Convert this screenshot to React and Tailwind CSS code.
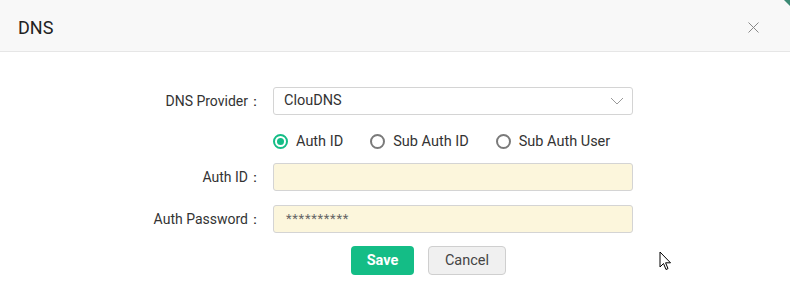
import React from 'react';

// DNS settings dialog
function Radio({ checked, label }) {
  return (
    <label className="flex items-center gap-[8px] cursor-pointer">
      <span
        className={
          checked
            ? 'flex h-[15px] w-[15px] items-center justify-center rounded-full border-2 border-[#14bd86]'
            : 'flex h-[15px] w-[15px] items-center justify-center rounded-full border-2 border-[#7a7a7a]'
        }
      >
        {checked && <span className="h-[7px] w-[7px] rounded-full bg-[#14bd86]" />}
      </span>
      <span className="text-[14.5px] text-[#333]">{label}</span>
    </label>
  );
}

function Row({ label, children, className = '' }) {
  return (
    <div className={`flex items-center ${className}`}>
      <div className="w-[273px] pr-[11px] text-right text-[14px] text-[#333]">
        {label}
      </div>
      <div className="w-[360px]">{children}</div>
    </div>
  );
}

export default function App() {
  return (
    <div
      className="relative h-[304px] w-[790px] overflow-hidden bg-white"
      style={{ fontFamily: 'Roboto, "Liberation Sans", sans-serif' }}
    >
      {/* Header */}
      <div className="flex h-[52px] items-center justify-between border-b border-[#e6e6e6] bg-[#f8f8f8] pl-[18px] pr-[31px] pt-[4px]">
        <h1 className="text-[18px] text-[#222]">DNS</h1>
        <svg width="11" height="11" viewBox="0 0 11 11" className="text-[#888]">
          <path d="M0.5 0.5L10.5 10.5M10.5 0.5L0.5 10.5" stroke="currentColor" strokeWidth="1" />
        </svg>
      </div>
      <div className="absolute right-0 top-0 h-[6px] w-[6px] bg-[#3c8a74] [clip-path:polygon(0_0,100%_0,100%_100%)]" />

      {/* Form */}
      <div className="flex flex-col pt-[35px]">
        <Row label="DNS Provider：">
          <div className="flex h-[28px] items-center justify-between rounded-[3px] border border-[#d4d4d4] bg-white pl-[10px] pr-[8px]">
            <span className="text-[14.5px] text-[#333]">ClouDNS</span>
            <svg width="14" height="8" viewBox="0 0 14 8" className="text-[#999]">
              <path d="M1 1L7 7L13 1" fill="none" stroke="currentColor" strokeWidth="1" />
            </svg>
          </div>
        </Row>

        <Row label="" className="mt-[13px]">
          <div className="flex h-[27px] items-center gap-[27px]">
            <Radio checked label="Auth ID" />
            <Radio label="Sub Auth ID" />
            <Radio label="Sub Auth User" />
          </div>
        </Row>

        <Row label="Auth ID：" className="mt-[8px]">
          <div className="h-[28px] rounded-[3px] border border-[#d4d4d4] bg-[#fcf6dc]" />
        </Row>

        <Row label="Auth Password：" className="mt-[14px]">
          <div className="flex h-[28px] items-center rounded-[3px] border border-[#d4d4d4] bg-[#fcf6dc] pl-[12px]">
            <span className="text-[13px] tracking-[0.7px] text-[#666]">**********</span>
          </div>
        </Row>

        <Row label="" className="mt-[13px]">
          <div className="flex gap-[14px] pl-[78px]">
            <button className="h-[29px] w-[63px] rounded-[4px] bg-[#14bd86] text-[14.5px] font-bold text-white">
              Save
            </button>
            <button className="h-[29px] w-[78px] rounded-[4px] border border-[#cfcfcf] bg-[#f0f0f0] text-[14.5px] text-[#444]">
              Cancel
            </button>
          </div>
        </Row>
      </div>

      {/* Mouse pointer */}
      <svg
        className="absolute left-[659px] top-[251px]"
        width="13"
        height="20"
        viewBox="0 0 13 20"
      >
        <path
          d="M1 1L1 16L4.5 12.5L7 18.5L9 17.6L6.6 11.8L11.5 11.8Z"
          fill="white"
          stroke="black"
          strokeWidth="1"
          strokeLinejoin="round"
        />
      </svg>
    </div>
  );
}
